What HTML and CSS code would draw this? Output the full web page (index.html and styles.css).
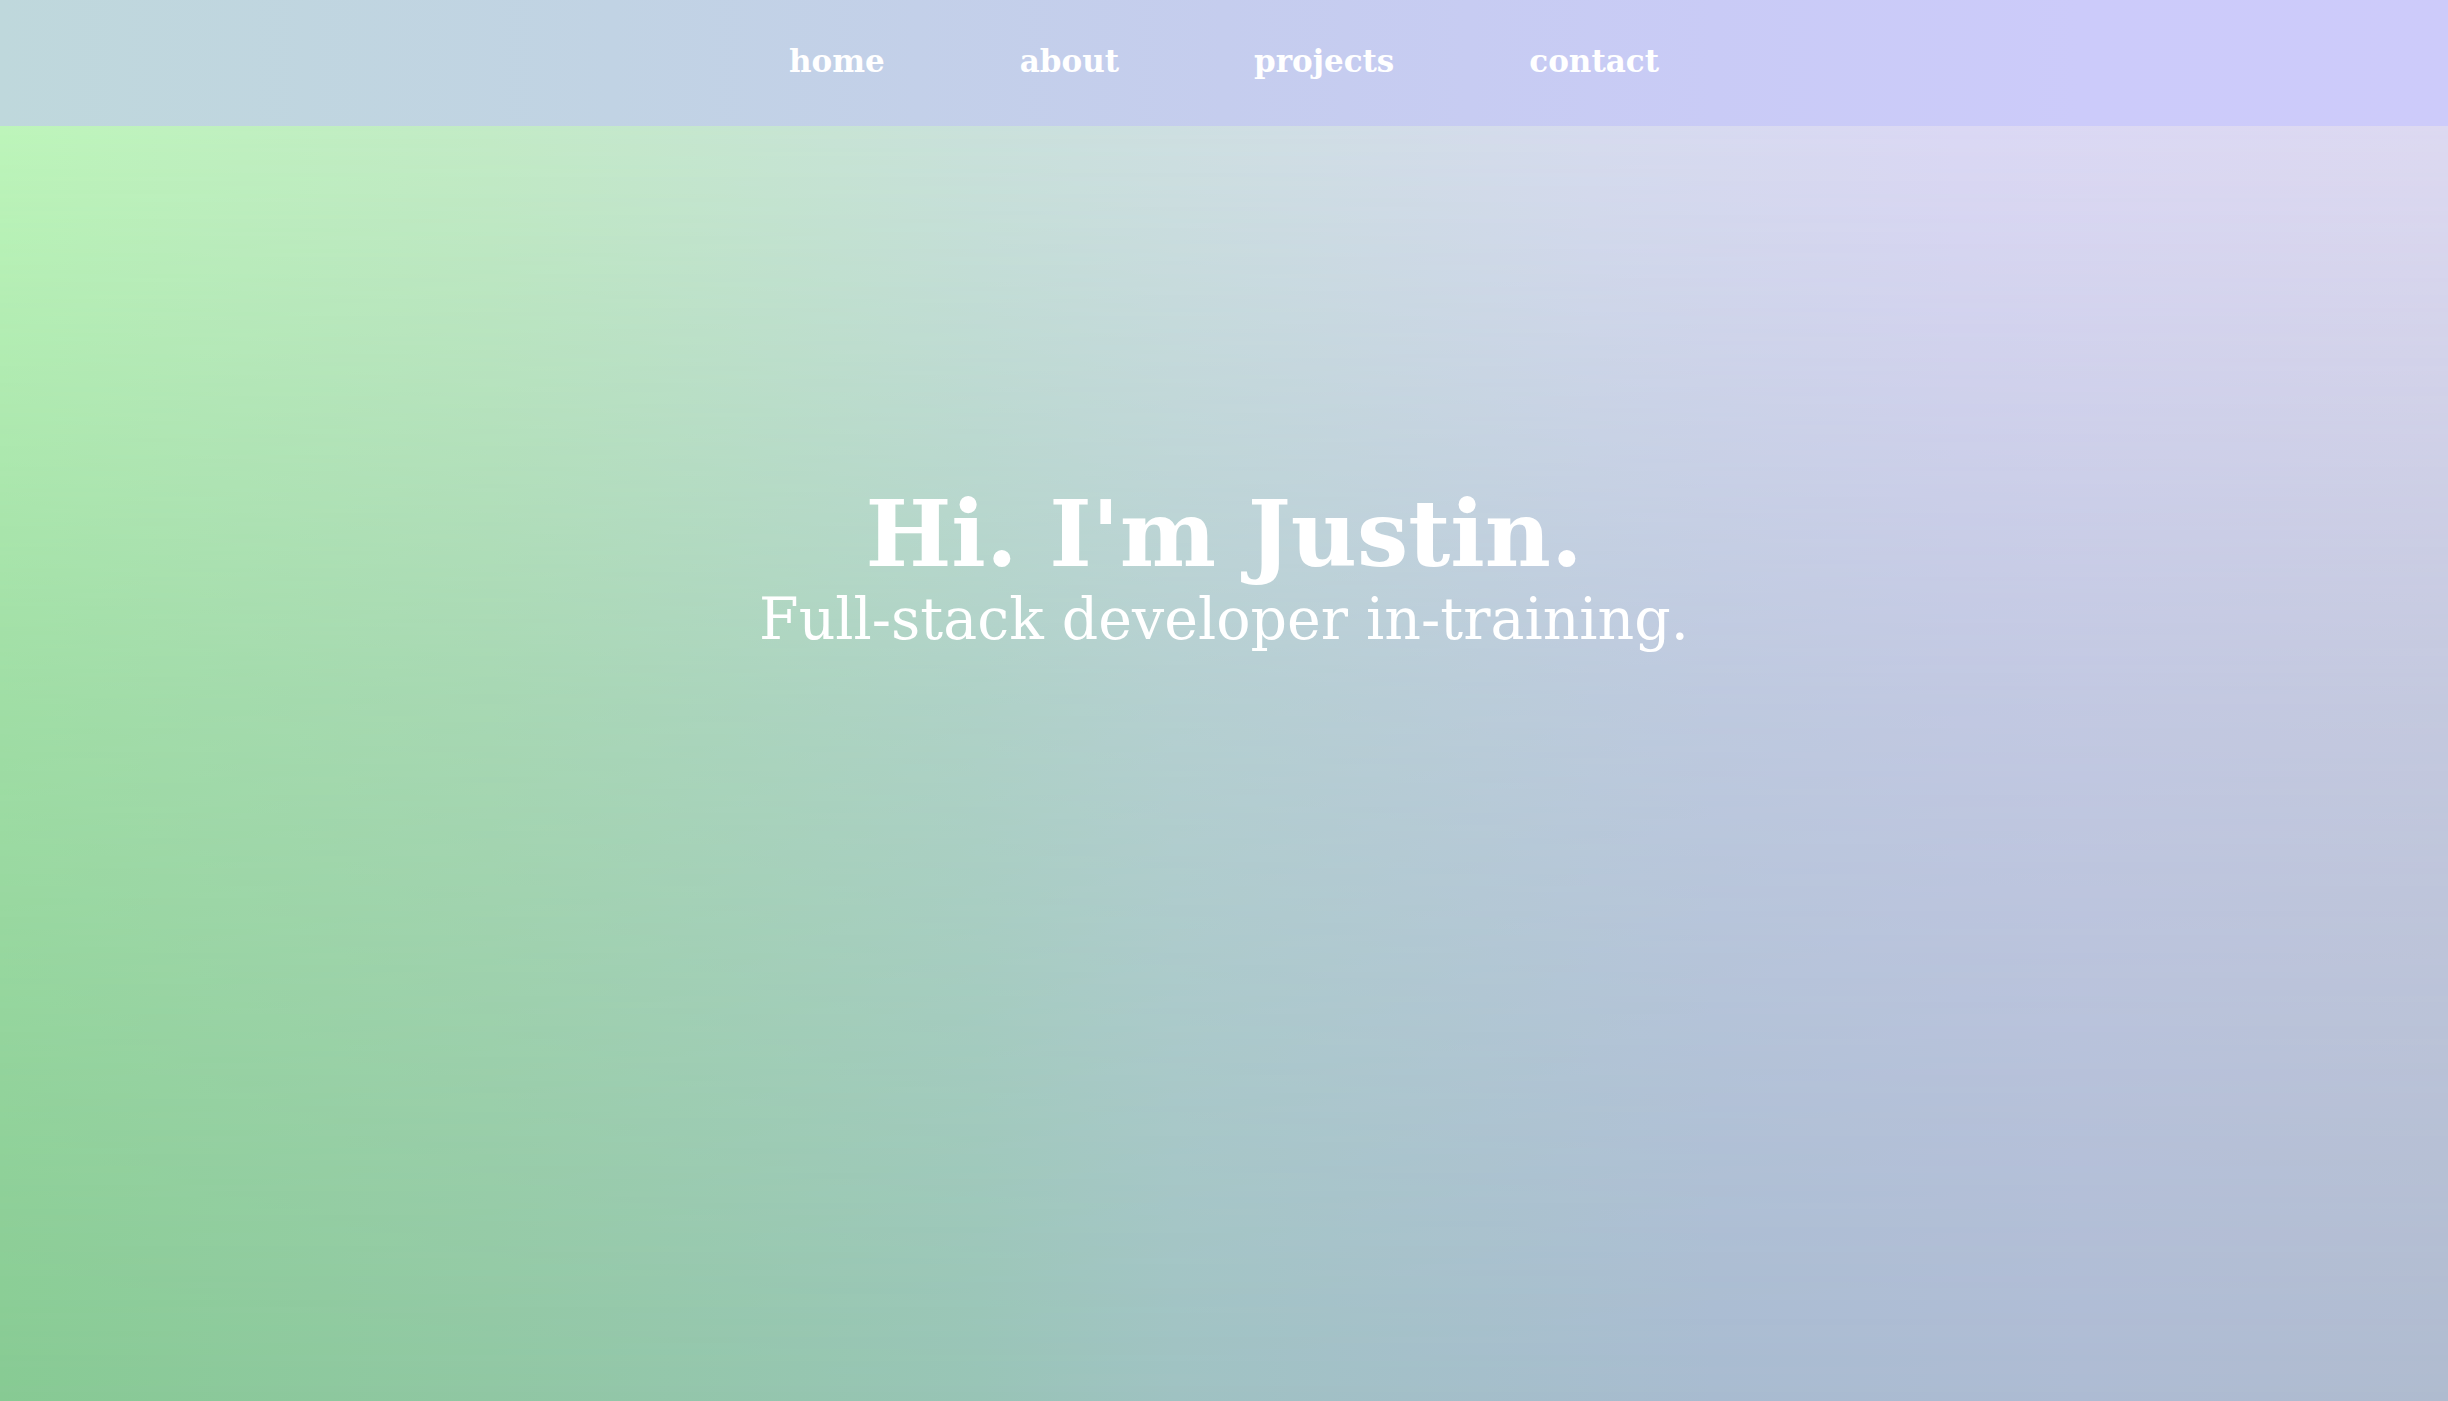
FILE: index.html
```html
<!DOCTYPE html>
<html lang="en">
<head>
<meta charset="utf-8">
<title>Justin</title>
<link rel="stylesheet" href="styles.css">
</head>
<body>
<div class="page">
  <nav class="nav">
    <a class="nav-link" href="#home">home</a>
    <a class="nav-link" href="#about">about</a>
    <a class="nav-link" href="#projects">projects</a>
    <a class="nav-link" href="#contact">contact</a>
  </nav>
  <main class="hero">
    <h1 class="hero-title">Hi. I'm Justin.</h1>
    <p class="hero-sub">Full-stack developer in-training.</p>
  </main>
</div>
</body>
</html>
```

FILE: styles.css
```css
* { box-sizing: border-box; }
html, body { margin: 0; padding: 0; }
body {
  font-family: "DejaVu Serif", Georgia, serif;
  color: #ffffff;
}
.page {
  display: flex;
  flex-direction: column;
  height: 1401px;
  position: relative;
  background: linear-gradient(to right, #bef6bb 0%, #c4ecc7 20%, #cbe2dc 40%, #cfe0e2 48%, #d7dcef 65%, #dcd9f5 80%, #dedaf2 100%);
  overflow: hidden;
}
.page::before {
  content: "";
  position: absolute;
  inset: 0;
  background: linear-gradient(to right, #87ca93 0%, #90c7a3 20%, #98c4b6 40%, #9fc2c2 48%, #a8bbd0 70%, #adbbd3 85%, #afbbcf 100%);
  -webkit-mask-image: linear-gradient(to bottom, rgba(0,0,0,0) 8%, rgba(0,0,0,0.55) 50%, #000 100%);
  mask-image: linear-gradient(to bottom, rgba(0,0,0,0) 8%, rgba(0,0,0,0.55) 50%, #000 100%);
  pointer-events: none;
}
.nav {
  position: relative;
  z-index: 1;
  height: 126px;
  flex: none;
  display: flex;
  justify-content: center;
  align-items: flex-start;
  gap: 135px;
  padding-top: 41px;
  background: linear-gradient(to right, #bfd8dc 0%, #c1d3e4 25%, #c5cdee 50%, #c9cbf6 70%, #cccbfa 85%, #cdcbfa 100%);
}
.nav-link {
  color: #ffffff;
  text-decoration: none;
  font-weight: bold;
  font-size: 31px;
  line-height: 40px;
}
.hero {
  position: relative;
  z-index: 1;
  flex: 1;
  display: flex;
  flex-direction: column;
  align-items: center;
  padding-top: 358px;
}
.hero-title {
  margin: 0;
  font-size: 91px;
  font-weight: bold;
  line-height: 100px;
}
.hero-sub {
  margin: 0;
  font-size: 57px;
  font-weight: normal;
  line-height: 70px;
}
```
